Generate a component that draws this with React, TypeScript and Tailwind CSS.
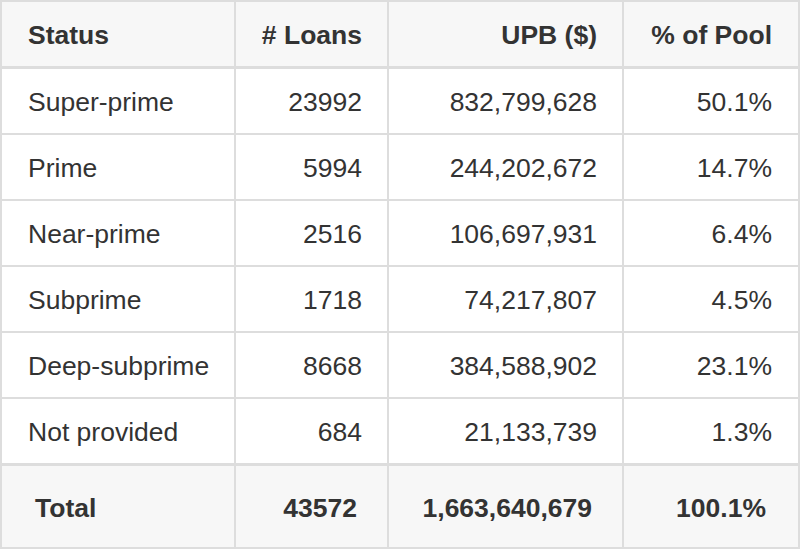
import React from 'react';

type Row = {
  status: string;
  loans: string;
  upb: string;
  pct: string;
};

const rows: Row[] = [
  { status: 'Super-prime', loans: '23992', upb: '832,799,628', pct: '50.1%' },
  { status: 'Prime', loans: '5994', upb: '244,202,672', pct: '14.7%' },
  { status: 'Near-prime', loans: '2516', upb: '106,697,931', pct: '6.4%' },
  { status: 'Subprime', loans: '1718', upb: '74,217,807', pct: '4.5%' },
  { status: 'Deep-subprime', loans: '8668', upb: '384,588,902', pct: '23.1%' },
  { status: 'Not provided', loans: '684', upb: '21,133,739', pct: '1.3%' },
];

export default function App() {
  return (
    <div className="w-[800px] h-[550px] bg-white text-[#333] font-['Liberation_Sans',Arial,sans-serif] text-[26.5px]">
      <div className="grid grid-cols-[236px_153px_235px_176px]">
        {/* Header */}
        <div className="h-[69px] flex items-center pt-[4px] pl-[26px] bg-[#f7f7f7] border-l-2 border-t-2 border-r-2 border-b-[3px] border-[#ddd] font-bold">
          Status
        </div>
        <div className="h-[69px] flex items-center justify-end pt-[4px] pr-[25px] bg-[#f7f7f7] border-t-2 border-r-2 border-b-[3px] border-[#ddd] font-bold">
          # Loans
        </div>
        <div className="h-[69px] flex items-center justify-end pt-[4px] pr-[25px] bg-[#f7f7f7] border-t-2 border-r-2 border-b-[3px] border-[#ddd] font-bold">
          UPB ($)
        </div>
        <div className="h-[69px] flex items-center justify-end pt-[4px] pr-[26px] bg-[#f7f7f7] border-t-2 border-r-2 border-b-[3px] border-[#ddd] font-bold">
          % of Pool
        </div>

        {/* Body */}
        {rows.map((r, i) => {
          const last = i === rows.length - 1;
          const b = last ? 'h-[67px] border-b-[3px]' : 'h-[66px] border-b-2';
          return (
            <React.Fragment key={r.status}>
              <div className={`${b} flex items-center pt-[4px] pl-[26px] border-l-2 border-r-2 border-[#ddd]`}>{r.status}</div>
              <div className={`${b} flex items-center justify-end pt-[4px] pr-[25px] border-r-2 border-[#ddd]`}>{r.loans}</div>
              <div className={`${b} flex items-center justify-end pt-[4px] pr-[25px] border-r-2 border-[#ddd]`}>{r.upb}</div>
              <div className={`${b} flex items-center justify-end pt-[4px] pr-[26px] border-r-2 border-[#ddd]`}>{r.pct}</div>
            </React.Fragment>
          );
        })}

        {/* Total */}
        <div className="h-[83px] flex items-center pt-[4px] pl-[33px] bg-[#f7f7f7] border-l-2 border-r-2 border-b-2 border-[#ddd] font-bold">
          Total
        </div>
        <div className="h-[83px] flex items-center justify-end pt-[4px] pr-[30px] bg-[#f7f7f7] border-r-2 border-b-2 border-[#ddd] font-bold">
          43572
        </div>
        <div className="h-[83px] flex items-center justify-end pt-[4px] pr-[30px] bg-[#f7f7f7] border-r-2 border-b-2 border-[#ddd] font-bold">
          1,663,640,679
        </div>
        <div className="h-[83px] flex items-center justify-end pt-[4px] pr-[32px] bg-[#f7f7f7] border-r-2 border-b-2 border-[#ddd] font-bold">
          100.1%
        </div>
      </div>
    </div>
  );
}
